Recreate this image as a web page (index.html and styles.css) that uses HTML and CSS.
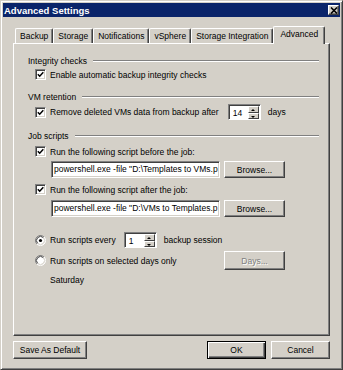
FILE: index.html
```html
<!DOCTYPE html>
<html lang="en">
<head>
  <meta charset="UTF-8">
  <title>Advanced Settings</title>
  <link rel="stylesheet" href="styles.css">
</head>
<body>
  <div class="window">
    <div class="titlebar">
      <span class="title">Advanced Settings</span>
      <span class="close">
        <svg width="8" height="7" viewBox="0 0 8 7"><path d="M1 0.5 L7 6.5 M7 0.5 L1 6.5" stroke="#000" stroke-width="1.6"/></svg>
      </span>
    </div>

    <div class="content">
      <div class="tabs">
        <div class="tab">Backup</div>
        <div class="tab">Storage</div>
        <div class="tab">Notifications</div>
        <div class="tab">vSphere</div>
        <div class="tab">Storage Integration</div>
        <div class="tab active">Advanced</div>
      </div>

      <div class="panel">
        <div class="group-head"><span>Integrity checks</span><i></i></div>
        <div class="row row-first">
          <span class="check"><svg width="7" height="7" viewBox="0 0 7 7"><path d="M0.8 3.2 L2.7 5.2 L6.3 1.2" fill="none" stroke="#000" stroke-width="1.5"/></svg></span>
          <span>Enable automatic backup integrity checks</span>
        </div>

        <div class="group-head gap"><span>VM retention</span><i></i></div>
        <div class="row row-spin">
          <span class="check"><svg width="7" height="7" viewBox="0 0 7 7"><path d="M0.8 3.2 L2.7 5.2 L6.3 1.2" fill="none" stroke="#000" stroke-width="1.5"/></svg></span>
          <span>Remove deleted VMs data from backup after</span>
          <span class="spin spin-days"><span class="spin-val">14</span><span class="spin-btns"><b class="up"></b><b class="down"></b></span></span>
          <span class="after">days</span>
        </div>

        <div class="group-head gap"><span>Job scripts</span><i></i></div>
        <div class="scripts">
          <div class="row row-script1">
            <span class="check"><svg width="7" height="7" viewBox="0 0 7 7"><path d="M0.8 3.2 L2.7 5.2 L6.3 1.2" fill="none" stroke="#000" stroke-width="1.5"/></svg></span>
            <span>Run the following script before the job:</span>
          </div>
          <div class="field-row first-field">
            <div class="field">powershell.exe -file "D:\Templates to VMs.p</div>
            <div class="btn browse">Browse...</div>
          </div>
          <div class="row row-script2">
            <span class="check"><svg width="7" height="7" viewBox="0 0 7 7"><path d="M0.8 3.2 L2.7 5.2 L6.3 1.2" fill="none" stroke="#000" stroke-width="1.5"/></svg></span>
            <span>Run the following script after the job:</span>
          </div>
          <div class="field-row second-field">
            <div class="field">powershell.exe -file "D:\VMs to Templates.p</div>
            <div class="btn browse">Browse...</div>
          </div>

          <div class="row row-radio1">
            <span class="radio"><svg width="11" height="11" viewBox="0 0 11 11">
              <circle cx="5.5" cy="5.5" r="4.5" fill="#fff"/>
              <path d="M1.96 9.04 A5 5 0 0 1 9.04 1.96" fill="none" stroke="#808080"/>
              <path d="M9.04 1.96 A5 5 0 0 1 1.96 9.04" fill="none" stroke="#fff"/>
              <path d="M2.67 8.33 A4 4 0 0 1 8.33 2.67" fill="none" stroke="#404040"/>
              <path d="M8.33 2.67 A4 4 0 0 1 2.67 8.33" fill="none" stroke="#d4d0c8"/>
              <circle cx="5.5" cy="5.5" r="1.6" fill="#000"/>
            </svg></span>
            <span>Run scripts every</span>
            <span class="spin spin-every"><span class="spin-val">1</span><span class="spin-btns"><b class="up"></b><b class="down"></b></span></span>
            <span class="after">backup session</span>
          </div>
          <div class="row row-radio2">
            <span class="radio"><svg width="11" height="11" viewBox="0 0 11 11">
              <circle cx="5.5" cy="5.5" r="4.5" fill="#fff"/>
              <path d="M1.96 9.04 A5 5 0 0 1 9.04 1.96" fill="none" stroke="#808080"/>
              <path d="M9.04 1.96 A5 5 0 0 1 1.96 9.04" fill="none" stroke="#fff"/>
              <path d="M2.67 8.33 A4 4 0 0 1 8.33 2.67" fill="none" stroke="#404040"/>
              <path d="M8.33 2.67 A4 4 0 0 1 2.67 8.33" fill="none" stroke="#d4d0c8"/>
            </svg></span>
            <span class="grow">Run scripts on selected days only</span>
            <div class="btn browse disabled">Days...</div>
          </div>
          <div class="days-list">Saturday</div>
        </div>
      </div>

      <div class="footer">
        <div class="btn save">Save As Default</div>
        <div class="spacer"></div>
        <div class="btn default">OK</div>
        <div class="btn cancel">Cancel</div>
      </div>
    </div>
  </div>
</body>
</html>
```

FILE: styles.css
```css
body {
  margin: 0;
  font-family: "Liberation Sans", Arial, sans-serif;
  font-size: 8.5px;
  color: #000;
  background: #d4d0c8;
}

.window {
  width: 343px;
  height: 370px;
  box-sizing: border-box;
  border: 1px solid;
  border-color: #d4d0c8 #404040 #404040 #d4d0c8;
  box-shadow: inset 1px 1px #fff, inset -1px -1px #808080;
  padding: 2px;
  display: flex;
  flex-direction: column;
}

.titlebar {
  height: 14px;
  background: #0a246a;
  color: #fff;
  display: flex;
  align-items: center;
  justify-content: space-between;
  padding: 0 1px;
}

.title {
  font-weight: bold;
  font-size: 9.5px;
}

.close {
  width: 11px;
  height: 10px;
  box-sizing: border-box;
  background: #d4d0c8;
  border: 1px solid;
  border-color: #fff #404040 #404040 #fff;
  box-shadow: inset -1px -1px #808080;
  display: flex;
  align-items: center;
  justify-content: center;
}

.content {
  padding: 9px 10px 0 10px;
}

/* tabs */
.tabs {
  display: flex;
  align-items: flex-end;
  height: 17px;
  padding-left: 2px;
  position: relative;
  z-index: 1;
}

.tab {
  height: 15px;
  box-sizing: border-box;
  padding: 0 4px;
  line-height: 14px;
  border: 1px solid;
  border-color: #fff #404040 transparent #fff;
  border-bottom: none;
  box-shadow: inset -1px 0 #808080;
  border-radius: 2px 2px 0 0;
  color: #000;
  white-space: nowrap;
}

.tab.active {
  height: 18px;
  margin-bottom: -1px;
  padding: 0 6px;
  background: #d4d0c8;
  line-height: 15px;
}

/* panel */
.panel {
  height: 293px;
  box-sizing: border-box;
  border: 1px solid;
  border-color: #fff #404040 #404040 #fff;
  box-shadow: inset -1px -1px #808080;
  padding: 10px 10px 0 14px;
}

.group-head {
  display: flex;
  align-items: center;
  height: 13px;
  gap: 6px;
}

.group-head i {
  flex: 1;
  height: 0;
  border-top: 1px solid #808080;
  border-bottom: 1px solid #fff;
}

.group-head.gap {
  margin-top: 9px;
}

.row {
  display: flex;
  align-items: center;
  padding-left: 7px;
  height: 13px;
  white-space: nowrap;
}

.row-first { margin-top: 1px; }
.row-spin { height: 16px; margin-top: 1px; }
.row-script1 { margin-top: 3px; }
.row-script2 { margin-top: 5px; }
.row-radio1 { height: 16px; margin-top: 15px; }
.row-radio2 { height: 19px; margin-top: 3px; }

.check {
  width: 11px;
  height: 11px;
  box-sizing: border-box;
  background: #fff;
  border: 1px solid;
  border-color: #808080 #fff #fff #808080;
  box-shadow: inset 1px 1px #404040, inset -1px -1px #d4d0c8;
  display: flex;
  align-items: center;
  justify-content: center;
  margin-right: 4px;
  flex-shrink: 0;
}

.radio {
  width: 11px;
  height: 11px;
  margin-right: 4px;
  display: flex;
}

.spin {
  display: flex;
  height: 16px;
  box-sizing: border-box;
  background: #fff;
  border: 1px solid;
  border-color: #808080 #fff #fff #808080;
  box-shadow: inset 1px 1px #404040;
  margin-left: 9px;
}

.spin-days { width: 33px; }
.spin-every { width: 33px; margin-left: 8px; }

.spin-val {
  flex: 1;
  padding: 2px 0 0 4px;
  line-height: 12px;
}

.spin-btns {
  width: 11px;
  display: flex;
  flex-direction: column;
  padding: 1px 1px 0 0;
}

.spin-btns b {
  flex: 1;
  background: #d4d0c8;
  border: 1px solid;
  border-color: #fff #404040 #404040 #fff;
  position: relative;
}

.spin-btns b::after {
  content: "";
  position: absolute;
  left: 2px;
  border-left: 2px solid transparent;
  border-right: 2px solid transparent;
}

.spin-btns .up::after {
  top: 2px;
  border-bottom: 2px solid #000;
}

.spin-btns .down::after {
  top: 2px;
  border-top: 2px solid #000;
}

.after {
  margin-left: 7px;
}

/* script fields */
.scripts {
  width: 257px;
}

.field-row {
  display: flex;
  gap: 4px;
  margin-left: 23px;
  height: 17px;
}

.first-field { margin-top: 3px; }
.second-field { margin-top: 4px; }

.field {
  flex: 1;
  min-width: 0;
  box-sizing: border-box;
  background: #fff;
  border: 1px solid;
  border-color: #808080 #fff #fff #808080;
  box-shadow: inset 1px 1px #404040, inset -1px -1px #d4d0c8;
  padding: 0 2px;
  line-height: 15px;
  white-space: nowrap;
  overflow: hidden;
}

.btn {
  box-sizing: border-box;
  background: #d4d0c8;
  border: 1px solid;
  border-color: #fff #404040 #404040 #fff;
  box-shadow: inset -1px -1px #808080;
  display: flex;
  align-items: center;
  justify-content: center;
  white-space: nowrap;
}

.browse {
  width: 61px;
}

.row .browse {
  height: 19px;
}

.grow {
  flex: 1;
}

.disabled {
  color: #808080;
  text-shadow: 1px 1px #fff;
}

.days-list {
  margin: 4px 0 0 22px;
  height: 13px;
  line-height: 13px;
}

/* footer buttons */
.footer {
  display: flex;
  margin-top: 5px;
  gap: 5px;
  height: 18px;
}

.footer .spacer {
  flex: 1;
}

.save {
  width: 74px;
}

.default {
  width: 59px;
  border: 1px solid #000;
  box-shadow: inset 1px 1px #fff, inset -1px -1px #404040, inset -2px -2px #808080;
}

.cancel {
  width: 59px;
}
```
